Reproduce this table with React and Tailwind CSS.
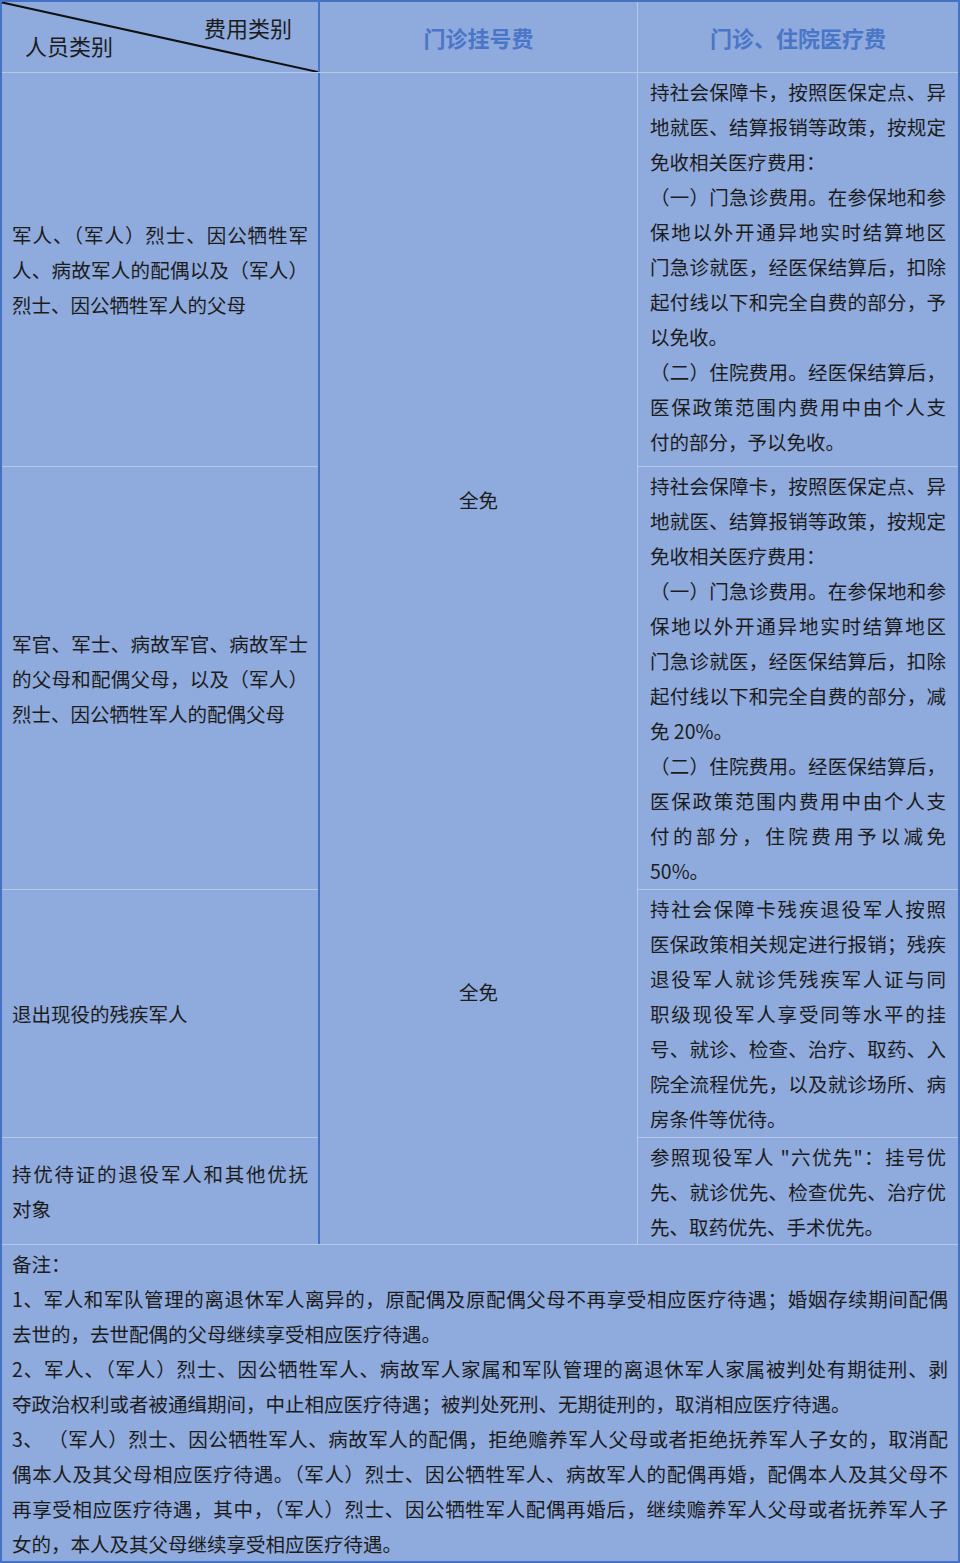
import React from "react";

const font = { fontFamily: '"Noto Sans CJK SC", "Noto Sans", sans-serif' };

// each entry is one printed line; true = stretch to the full width
const rows = [
  {
    h: "h-[394px]",
    who: ["军人、（军人）烈士、因公牺牲军", "人、病故军人的配偶以及（军人）", "烈士、因公牺牲军人的父母"],
    cost: [
      ["持社会保障卡，按照医保定点、异", true],
      ["地就医、结算报销等政策，按规定", true],
      ["免收相关医疗费用：", false],
      ["（一）门急诊费用。在参保地和参", true],
      ["保地以外开通异地实时结算地区", true],
      ["门急诊就医，经医保结算后，扣除", true],
      ["起付线以下和完全自费的部分，予", true],
      ["以免收。", false],
      ["（二）住院费用。经医保结算后，", true],
      ["医保政策范围内费用中由个人支", true],
      ["付的部分，予以免收。", false],
    ],
  },
  {
    h: "h-[423px]",
    who: ["军官、军士、病故军官、病故军士", "的父母和配偶父母，以及（军人）", "烈士、因公牺牲军人的配偶父母"],
    cost: [
      ["持社会保障卡，按照医保定点、异", true],
      ["地就医、结算报销等政策，按规定", true],
      ["免收相关医疗费用：", false],
      ["（一）门急诊费用。在参保地和参", true],
      ["保地以外开通异地实时结算地区", true],
      ["门急诊就医，经医保结算后，扣除", true],
      ["起付线以下和完全自费的部分，减", true],
      ["免 20%。", false],
      ["（二）住院费用。经医保结算后，", true],
      ["医保政策范围内费用中由个人支", true],
      ["付的部分，住院费用予以减免", true],
      ["50%。", false],
    ],
  },
  {
    h: "h-[248px]",
    who: ["退出现役的残疾军人"],
    cost: [
      ["持社会保障卡残疾退役军人按照", true],
      ["医保政策相关规定进行报销；残疾", true],
      ["退役军人就诊凭残疾军人证与同", true],
      ["职级现役军人享受同等水平的挂", true],
      ["号、就诊、检查、治疗、取药、入", true],
      ["院全流程优先，以及就诊场所、病", true],
      ["房条件等优待。", false],
    ],
  },
  {
    h: "h-[106px]",
    who: ["持优待证的退役军人和其他优抚", "对象"],
    cost: [
      ['参照现役军人 "六优先"：挂号优', true],
      ["先、就诊优先、检查优先、治疗优", true],
      ["先、取药优先、手术优先。", false],
    ],
  },
];

const notes = [
  ["备注：", false],
  ["1、军人和军队管理的离退休军人离异的，原配偶及原配偶父母不再享受相应医疗待遇；婚姻存续期间配偶", true],
  ["去世的，去世配偶的父母继续享受相应医疗待遇。", false],
  ["2、军人、（军人）烈士、因公牺牲军人、病故军人家属和军队管理的离退休军人家属被判处有期徒刑、剥", true],
  ["夺政治权利或者被通缉期间，中止相应医疗待遇；被判处死刑、无期徒刑的，取消相应医疗待遇。", false],
  ["3、 （军人）烈士、因公牺牲军人、病故军人的配偶，拒绝赡养军人父母或者拒绝抚养军人子女的，取消配", true],
  ["偶本人及其父母相应医疗待遇。（军人）烈士、因公牺牲军人、病故军人的配偶再婚，配偶本人及其父母不", true],
  ["再享受相应医疗待遇，其中，（军人）烈士、因公牺牲军人配偶再婚后，继续赡养军人父母或者抚养军人子", true],
  ["女的，本人及其父母继续享受相应医疗待遇。", false],
];

const Line = ({ text, full }) => (
  <div className={full ? "text-justify [text-align-last:justify]" : ""}>{text}</div>
);

export default function App() {
  return (
    <div
      style={font}
      className="w-[960px] h-[1563px] bg-[#8faadc] border-2 border-[#4472c4] text-[#1c1c1c] text-[19.5px] leading-[35px] flex flex-col"
    >
      {/* header */}
      <div className="flex h-[71px] border-b border-[#b7c9ea]">
        <div className="relative w-[318px] border-r-2 border-[#4472c4] text-[22px] leading-[22px]">
          <svg className="absolute inset-0" width="316" height="70" viewBox="0 0 316 70" preserveAspectRatio="none">
            <line x1="-2" y1="0" x2="316" y2="70" stroke="#111" strokeWidth="2" />
          </svg>
          <div className="text-right pr-[26px] pt-[14px]">费用类别</div>
          <div className="pl-[23px] -mt-[4px]">人员类别</div>
        </div>
        <div className="w-[318px] border-r border-[#b7c9ea] flex items-center justify-center text-[22px] font-bold text-[#4a76c8]">
          门诊挂号费
        </div>
        <div className="flex-1 flex items-center justify-center text-[22px] font-bold text-[#4a76c8]">
          门诊、住院医疗费
        </div>
      </div>

      {/* body */}
      <div className="flex border-b border-[#b7c9ea]">
        <div className="w-[318px] border-r-2 border-[#4472c4] flex flex-col">
          {rows.map((r, i) => (
            <div
              key={i}
              className={`${r.h} px-[10px] flex flex-col justify-center ${i < rows.length - 1 ? "border-b border-[#b7c9ea]" : ""}`}
            >
              {r.who.map((t, j) => (
                <Line key={j} text={t} full={j < r.who.length - 1} />
              ))}
            </div>
          ))}
        </div>
        <div className="w-[318px] border-r border-[#b7c9ea] flex flex-col items-center">
          <div className="mt-[409px]">全免</div>
          <div className="mt-[457px]">全免</div>
        </div>
        <div className="flex-1 flex flex-col">
          {rows.map((r, i) => (
            <div
              key={i}
              className={`${r.h} pl-[12px] pr-[12px] pt-px ${i < rows.length - 1 ? "border-b border-[#b7c9ea]" : ""}`}
            >
              {r.cost.map(([t, full], j) => (
                <Line key={j} text={t} full={full} />
              ))}
            </div>
          ))}
        </div>
      </div>

      {/* notes */}
      <div className="flex-1 px-[10px] pt-px">
        {notes.map(([t, full], j) => (
          <Line key={j} text={t} full={full} />
        ))}
      </div>
    </div>
  );
}
